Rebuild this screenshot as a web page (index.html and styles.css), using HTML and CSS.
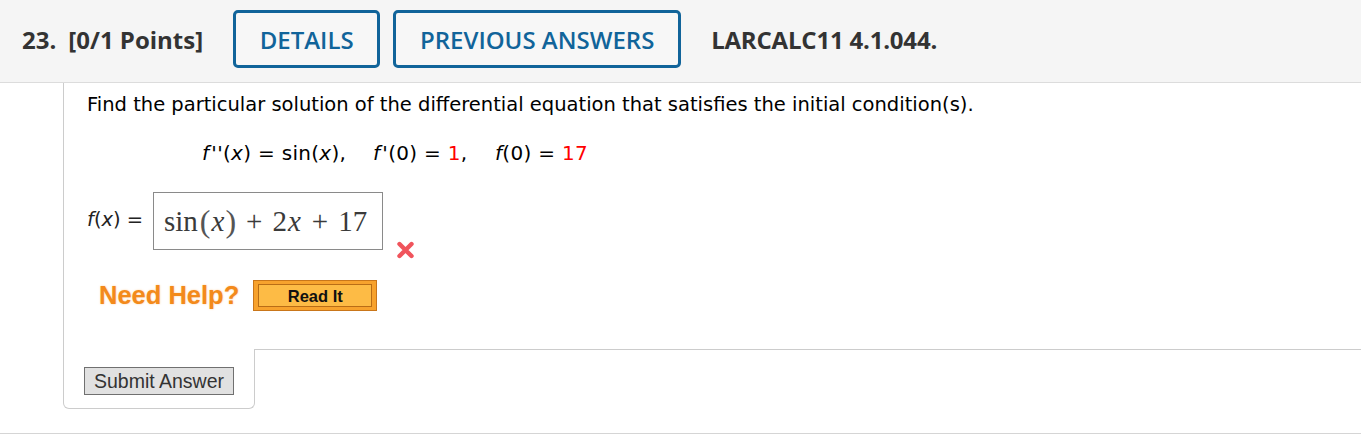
FILE: index.html
```html
<!DOCTYPE html>
<html>
<head>
<meta charset="utf-8">
<link rel="stylesheet" href="styles.css">
</head>
<body>
<div class="header">
  <span class="qnum">23.</span>
  <span class="points">[0/1 Points]</span>
  <span class="hbtn hbtn-details">DETAILS</span>
  <span class="hbtn hbtn-prev">PREVIOUS ANSWERS</span>
  <span class="ref">LARCALC11 4.1.044.</span>
</div>
<div class="qbody">
  <p class="prompt">Find the particular solution of the differential equation that satisfies the initial condition(s).</p>
  <p class="eqn"><span class="seg seg1"><i class="fn">f</i>''(<i>x</i>) = sin(<i>x</i>),</span><span class="seg seg2"><i class="fn">f</i>'(0) = <span class="red">1</span>,</span><span class="seg"><i>f</i>(0) = <span class="red">17</span></span></p>
  <div class="answer-row">
    <span class="flabel"><i>f</i>(<i>x</i>) =</span>
    <span class="answer-box"><span class="m-fn">sin</span><span class="m-paren">(</span><i class="m-var">x</i><span class="m-paren">)</span><span class="m-op">+</span>2<i class="m-var">x</i><span class="m-op">+</span>17</span>
    <svg class="xmark" width="19" height="18" viewBox="0 0 19 18"><path d="M3.5 3 L15.5 15 M15.5 3 L3.5 15" stroke="#f0545c" stroke-width="4.4" stroke-linecap="round"/></svg>
  </div>
  <div class="help-row">
    <span class="needhelp">Need Help?</span>
    <span class="readit"><span class="readit-inner">Read It</span></span>
  </div>
</div>
<div class="lower">
  <div class="submit-box"><span class="submit-btn">Submit Answer</span></div>
  <div class="filler"></div>
</div>
<div class="footer-line"></div>
</body>
</html>
```
FILE: styles.css
```css
body {
  margin: 0;
  background: #fff;
  font-family: "DejaVu Sans", Verdana, sans-serif;
  color: #000;
}
.header {
  display: flex;
  align-items: center;
  height: 58px;
  padding: 10px 0 14px 22px;
  background: #f5f5f5;
  border-bottom: 1px solid #dcdcdc;
  font-family: "Open Sans", sans-serif;
  font-weight: 700;
  font-size: 24px;
  color: #333;
}
.qnum { margin-right: 12px; }
.points { margin-right: 30px; }
.hbtn {
  box-sizing: border-box;
  height: 58px;
  display: flex;
  align-items: center;
  justify-content: center;
  border: 3px solid #11649a;
  border-radius: 5px;
  color: #11649a;
  font-weight: 600;
  font-size: 24px;
  background: #f7f7f7;
}
.hbtn-details { width: 147px; margin-right: 13px; }
.hbtn-prev { width: 288px; margin-right: 30px; }
.ref { color: #333; letter-spacing: -0.2px; }

.qbody {
  margin-left: 63px;
  border-left: 1px solid #ccc;
  height: 266px;
  padding-left: 23px;
  padding-top: 1px;
  box-sizing: border-box;
}
.prompt {
  margin: 9px 0 0 0;
  font-size: 19.5px;
  line-height: 24px;
}
.eqn {
  margin: 24px 0 0 115px;
  font-size: 20px;
  line-height: 24px;
  white-space: nowrap;
  display: flex;
}
.seg { display: inline-block; letter-spacing: 0.3px; }
.seg1 { width: 171px; }
.seg2 { width: 122px; }
.fn { padding-right: 2px; }
.red { color: #f00; }
.answer-row {
  display: flex;
  align-items: flex-start;
  margin-top: 27px;
}
.flabel {
  font-size: 19.5px;
  margin-top: 16px;
  width: 66px;
  flex: none;
  color: #222;
}
.answer-box {
  box-sizing: border-box;
  width: 230px;
  height: 58px;
  border: 1px solid #8a8a8a;
  display: flex;
  align-items: center;
  padding-left: 10px;
  font-family: "Liberation Serif", "DejaVu Serif", serif;
  font-size: 29px;
  color: #3a3a3a;
  white-space: nowrap;
}
.m-fn { margin-right: 2px; }
.m-paren { font-size: 32px; color: #555; font-weight: 300; }
.m-var { margin: 0 1px; }
.m-op { margin: 0 10px; }
.xmark { margin: 49px 0 0 13px; flex: none; }
.help-row {
  display: flex;
  align-items: center;
  margin-top: 21px;
  margin-left: 12px;
}
.needhelp {
  font-family: "Liberation Sans", Arial, sans-serif;
  font-weight: 700;
  font-size: 25.5px;
  color: #f38a1b;
  text-shadow: 0 0 2px rgba(250, 170, 80, 0.6);
  margin-right: 14px;
}
.readit {
  box-sizing: border-box;
  width: 124px;
  height: 31px;
  background: #f7a22d;
  border: 1px solid #c9761a;
  padding: 3px 4px;
  display: flex;
}
.readit-inner {
  flex: 1;
  border: 1px solid #b96d16;
  background: #fdbb45;
  display: flex;
  align-items: center;
  justify-content: center;
  padding-top: 2px;
  font-family: "Liberation Sans", Arial, sans-serif;
  font-weight: 700;
  font-size: 16.5px;
  color: #111;
}
.lower {
  display: flex;
  margin-left: 63px;
}
.submit-box {
  box-sizing: border-box;
  width: 192px;
  height: 60px;
  border: 1px solid #ccc;
  border-top: none;
  border-radius: 0 0 6px 6px;
  padding: 18px 0 0 20px;
}
.filler {
  flex: 1;
  border-top: 1px solid #ccc;
}
.submit-btn {
  box-sizing: border-box;
  display: inline-flex;
  align-items: center;
  justify-content: center;
  width: 150px;
  height: 28px;
  background: #e1e1e1;
  border: 1px solid #707070;
  font-family: "Liberation Sans", Arial, sans-serif;
  font-size: 19.5px;
  color: #333;
}
.footer-line {
  margin-top: 24px;
  border-top: 1px solid #d5d5d5;
}
```
